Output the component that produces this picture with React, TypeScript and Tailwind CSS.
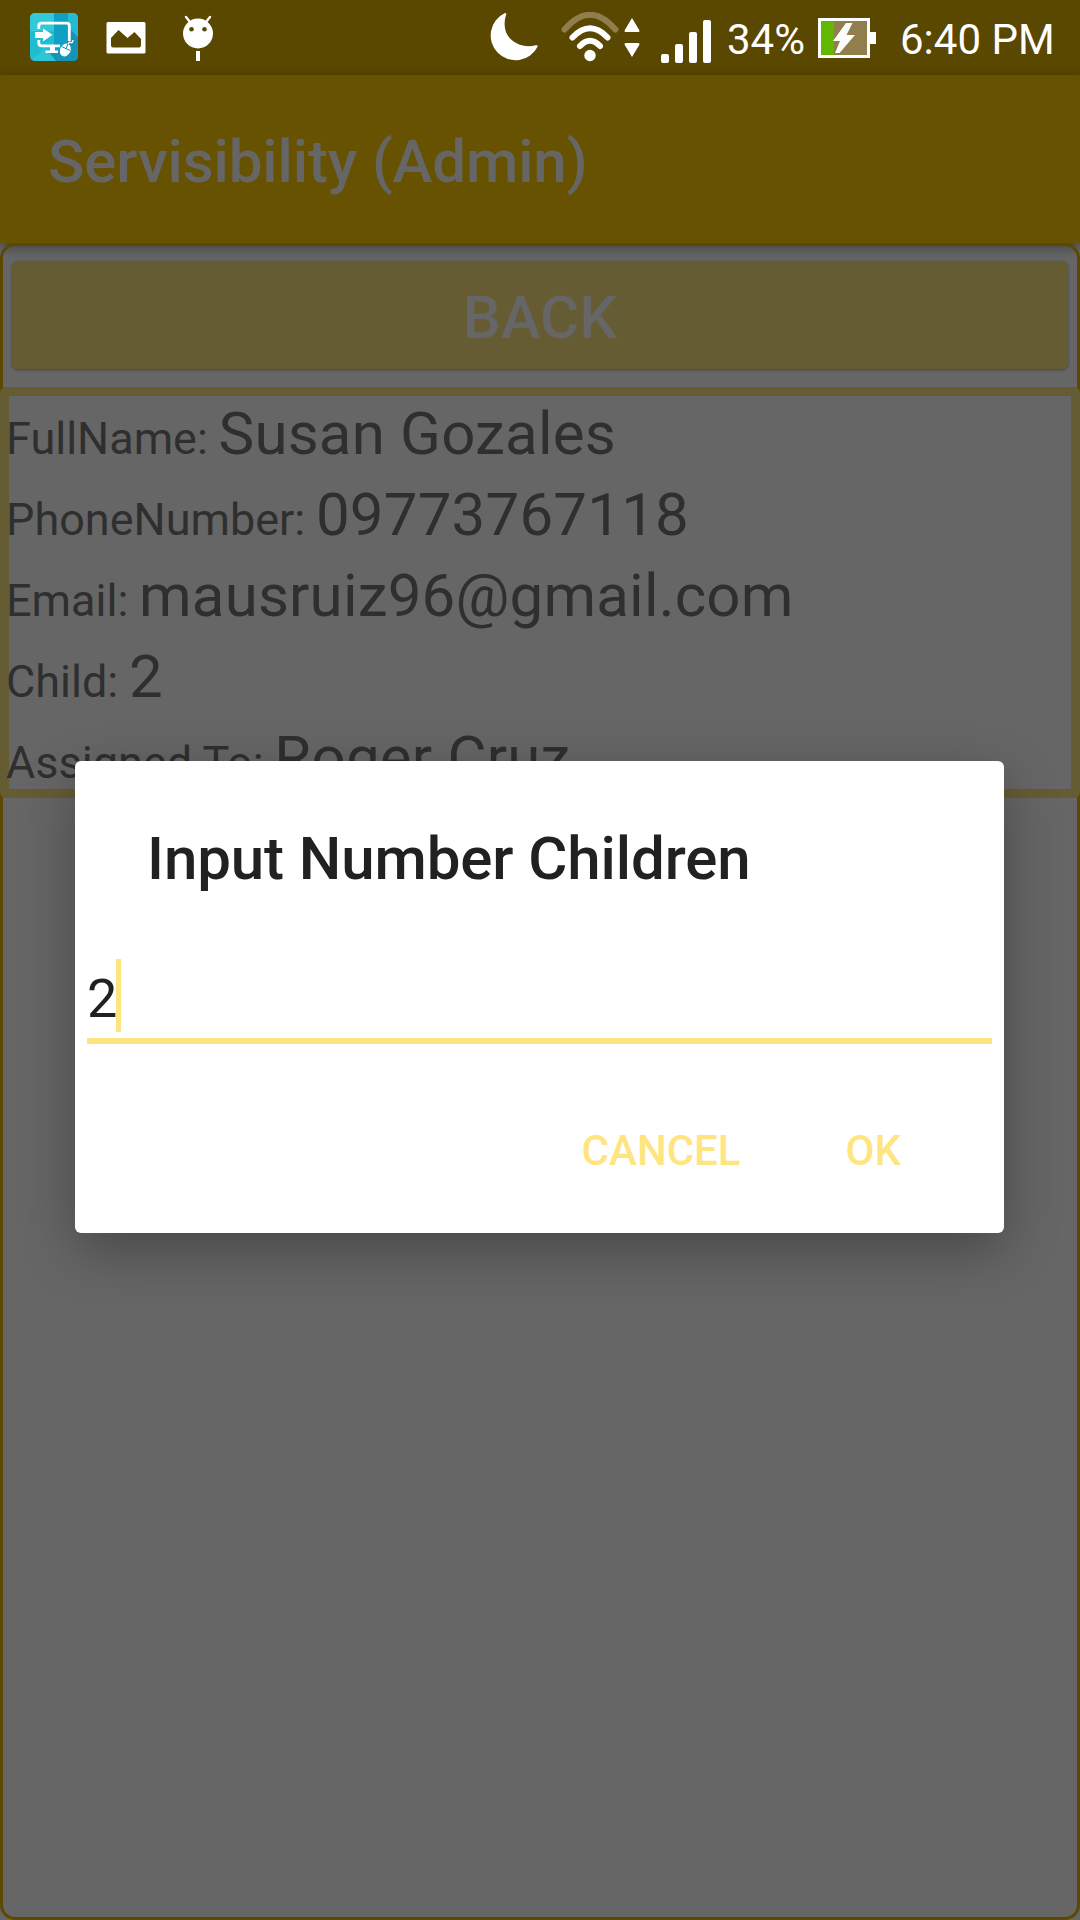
const fields = [
  { label: 'FullName:', value: 'Susan Gozales' },
  { label: 'PhoneNumber:', value: '09773767118' },
  { label: 'Email:', value: 'mausruiz96@gmail.com' },
  { label: 'Child:', value: '2' },
  { label: 'Assigned To:', value: 'Roger Cruz' },
];

function RemoteLinkIcon() {
  return (
    <svg width="48" height="48" viewBox="0 0 48 48" className="ml-[30px] mt-[13px] shrink-0">
      <defs>
        <clipPath id="tile"><rect width="48" height="48" rx="5" /></clipPath>
      </defs>
      <g clipPath="url(#tile)">
        <rect width="48" height="48" fill="#20bdd2" />
        <path d="M0 0H24V18H0Z" fill="#33c9da" />
        <path d="M24 0H38V48H24Z" fill="#0fa1c4" />
        <path d="M38 0H48V14H38Z" fill="#27bad3" />
        <path d="M38 14L48 24V48H26L20 40L38 34Z" fill="#1594b8" />
        <path d="M0 48L14 36L26 48Z" fill="#2cc6d6" />
      </g>
      <path d="M8.800 16V13Q8.800 10.200 11.600 10.200H36.500Q39.300 10.200 39.300 13V28M8.800 27V30Q8.800 32.800 11.600 32.800H30" fill="none" stroke="#fff" strokeWidth="2.800" />
      <path d="M5 19H13V15.500L22.500 21.800L13 28.500V25H5Z" fill="#fff" />
      <path d="M20 33.500H25V37.500H28V40H15.500V37.500H20Z" fill="#fff" />
      <ellipse cx="35.300" cy="37" rx="5.200" ry="6.600" transform="rotate(25 35.300 37)" fill="#fff" />
      <path d="M31.500 33.500L40 37.500M36 36L38 30.500" stroke="#1594b8" strokeWidth="1" />
      <path d="M38 31Q39.500 28.500 41 29.500T43 27" fill="none" stroke="#fff" strokeWidth="1.300" />
    </svg>
  );
}

function StatusBar() {
  return (
    <div className="flex h-[75px] items-start bg-[#5a4700] text-[42px] leading-[49px] text-white">
      <RemoteLinkIcon />
      <svg width="40" height="34" viewBox="0 0 40 34" className="ml-[28px] mt-[21px] shrink-0">
        <path fillRule="evenodd" fill="#fff" d="M2 1H38Q39.500 1 39.500 2.500V31Q39.500 32.500 38 32.500H2Q.5 32.500 .5 31V2.500Q.5 1 2 1ZM5 24.500Q5 26.500 7 26.500H33Q35 26.500 35 24.500V18L28.500 11L21.500 17L12.500 9L5 17Z" />
      </svg>
      <svg width="32" height="48" viewBox="0 0 32 48" className="ml-[36px] mt-[15px] shrink-0">
        <path d="M8 7L4 2M24 7L28 2" stroke="#fff" strokeWidth="2.400" strokeLinecap="round" />
        <circle cx="16" cy="18.500" r="15" fill="#fff" />
        <circle cx="9.500" cy="14.300" r="2.300" fill="#5a4700" />
        <circle cx="22.500" cy="14.300" r="2.300" fill="#5a4700" />
        <path d="M14 36H18V46H14Z" fill="#fff" />
      </svg>
      <svg width="50" height="50" viewBox="0 0 50 50" className="ml-[275px] mt-[12px] shrink-0">
        <path d="M16 1A24.800 24.800 0 1 0 48.700 34.500Q49 32.700 46.500 33.300C31.500 37.500 10.500 27 16.700 4Q18 .7 16 1Z" fill="#fff" />
      </svg>
      <svg width="58" height="50" viewBox="0 0 58 50" className="ml-[22px] mt-[12px] shrink-0" fill="none" stroke="#fff" strokeLinecap="round">
        <path d="M3.500 17.500Q29 -12 54.500 17.500" strokeWidth="6" stroke="#907f4c" />
        <path d="M11.500 25.500Q29 7 46.500 25.500" strokeWidth="6" />
        <path d="M19 34Q29 23.500 39 34" strokeWidth="6" />
        <circle cx="29" cy="43.500" r="5.700" fill="#fff" stroke="none" />
      </svg>
      <svg width="16" height="40" viewBox="0 0 16 40" className="ml-[5px] mt-[18px] shrink-0" fill="#fff">
        <path d="M8 0L15.500 12.500Q15.500 14 14.500 14H1.500Q.5 14 .5 12.500ZM8 39L15.500 26.500Q15.500 25 14.500 25H1.500Q.5 25 .5 26.500Z" />
      </svg>
      <svg width="52" height="44" viewBox="0 0 52 44" className="ml-[20px] mt-[19px] shrink-0" fill="#fff">
        <rect x="1" y="35" width="8" height="9" rx="2" />
        <rect x="15" y="25" width="8" height="19" rx="2" />
        <rect x="29" y="13" width="8" height="31" rx="2" />
        <rect x="43" y="1" width="8" height="43" rx="2" />
      </svg>
      <span className="ml-[15px] mt-[15px] w-[80px] whitespace-nowrap">34%</span>
      <svg width="60" height="42" viewBox="0 0 60 42" className="ml-[11px] mt-[17px] shrink-0">
        <path d="M0 1H52V15H58V27H52V41H0Z" fill="#fff" />
        <rect x="3" y="4" width="46" height="34" fill="#907f4c" />
        <rect x="3" y="4" width="13" height="34" fill="#62b800" />
        <path d="M28 6H34.500L28.500 18H37L21.500 36H17L22 24H15Z" fill="#fff" />
      </svg>
      <span className="ml-[22px] mt-[15px] whitespace-nowrap">6:40 PM</span>
    </div>
  );
}

function Dialog() {
  return (
    <div className="absolute left-[75px] top-[761px] flex h-[472px] w-[929px] flex-col rounded-[6px] bg-white text-[#212121] shadow-[0_18px_56px_rgba(0,0,0,0.3)]">
      <h2 className="ml-[72px] mt-[63px] text-[60px] font-medium leading-[70px] tracking-[-0.1px]">Input Number Children</h2>
      <div className="mx-3 mt-[65px] flex h-[85px] items-start border-b-[6px] border-[#ffe57f]">
        <span className="mt-[8px] w-[29px] text-[54px] leading-[63px]">2</span>
        <span className="h-[73px] w-[5px] bg-[#ffe57f]" />
      </div>
      <div className="mr-[103px] mt-[82px] flex justify-end gap-[105px] text-[42px] font-medium leading-[49px] text-[#ffe57f]">
        <button>CANCEL</button>
        <button>OK</button>
      </div>
    </div>
  );
}

export default function App() {
  return (
    <div className="relative flex h-[1920px] w-[1080px] flex-col overflow-hidden bg-[#666666] font-[Roboto,sans-serif]">
      <StatusBar />
      <header className="flex h-[168px] items-center bg-[#665200] pl-[48px] pt-[5px] text-[60px] font-medium leading-[70px] tracking-[-0.1px] text-[#666666] shadow-[0_4px_12px_rgba(0,0,0,0.4)]">
        Servisibility (Admin)
      </header>
      <main className="relative flex h-[1677px] flex-col rounded-[15px] border-[3px] border-[#5c4800]">
        <button className="mx-[9px] mt-[15px] flex h-[108px] shrink-0 items-center justify-center rounded-[6px] bg-[#665c33] pt-[6px] text-[60px] font-medium leading-[70px] text-[#666666] shadow-[0_1px_3px_rgba(0,0,0,0.35)]">
          BACK
        </button>
        <section className="-mx-[3px] mt-[18px] h-[411px] shrink-0 rounded-[6px] border-[9px] border-[#665c33] bg-[#666666] text-[#2f2f2f]">
          <div className="-ml-[3px] -mt-[3px]">
            {fields.map((field) => (
              <p key={field.label} className="h-[81px] whitespace-nowrap text-[45px] leading-[81px]">
                {field.label}<span className="text-[60px] tracking-[0.2px]"><span className="text-[45px] tracking-[-0.5px]"> </span>{field.value}</span>
              </p>
            ))}
          </div>
        </section>
      </main>
      <Dialog />
    </div>
  );
}
